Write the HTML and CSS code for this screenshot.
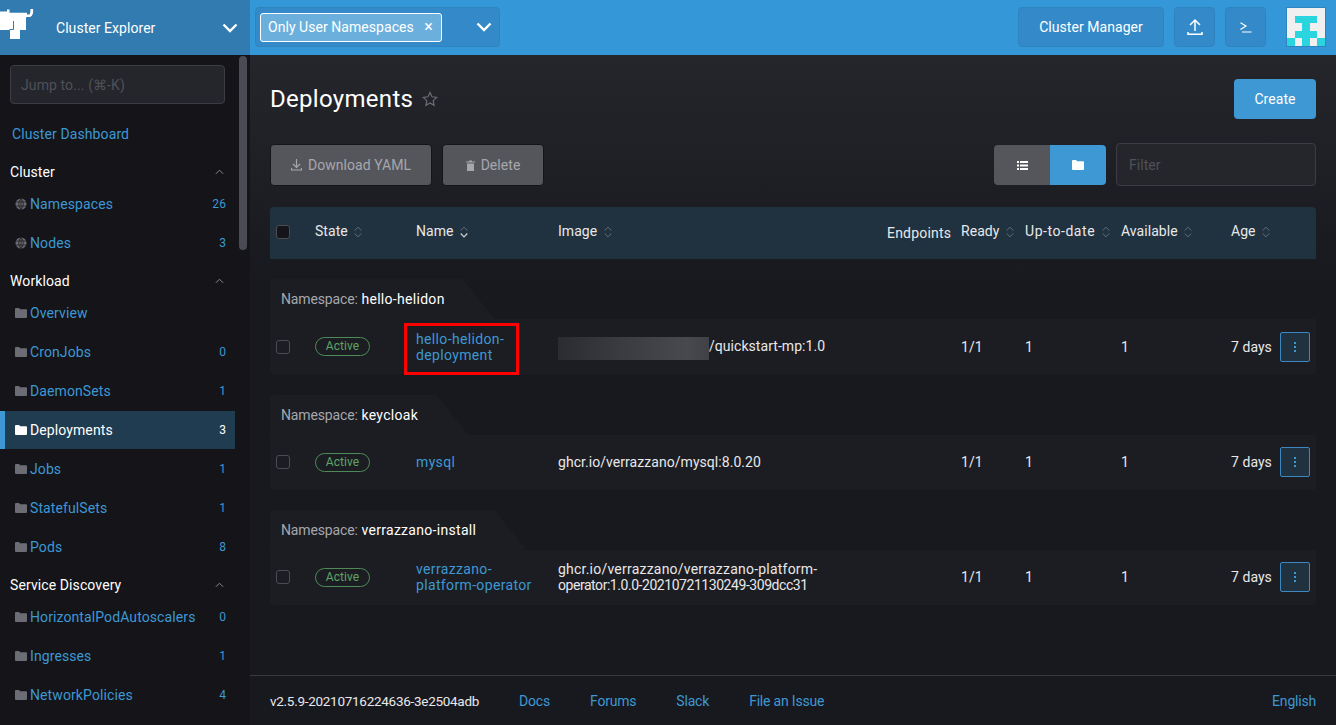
FILE: index.html

```html
<!DOCTYPE html>
<html lang="en">
<head>
  <meta charset="UTF-8" />
  <title>Deployments</title>
  <link rel="stylesheet" href="styles.css">
</head>
<body>
  <svg class="icon-defs" width="0" height="0">
    <symbol id="folder" viewBox="0 0 12 10"><path d="M0 1a1 1 0 0 1 1-1h3l1.200 1.200H11a1 1 0 0 1 1 1V9a1 1 0 0 1-1 1H1a1 1 0 0 1-1-1z"/></symbol>
    <symbol id="globe" viewBox="0 0 12 12"><circle cx="6" cy="6" r="5.500"/><path fill="none" stroke="#141419" stroke-width=".7" d="M.5 4h11M.5 8h11M6 .5v11M6 .5c-3 3-3 8 0 11M6 .5c3 3 3 8 0 11"/></symbol>
    <symbol id="sort" viewBox="0 0 8 12"><path fill="none" stroke="currentColor" stroke-width="1" d="M.7 4.500L4 1.200l3.300 3.300M.7 7.500L4 10.800l3.300-3.300"/></symbol>
    <symbol id="sort-down" viewBox="0 0 8 12"><path fill="none" stroke="#6c6d74" stroke-width="1" d="M.7 4.500L4 1.200l3.300 3.300"/><path fill="none" stroke="#d0d1d5" stroke-width="1.200" d="M.7 7.500L4 10.800l3.300-3.300"/></symbol>
    <symbol id="chev" viewBox="0 0 16 10"><path fill="none" stroke="currentColor" stroke-width="2.400" d="M1.500 1.500L8 8l6.500-6.500"/></symbol>
    <symbol id="up" viewBox="0 0 10 6"><path fill="none" stroke="currentColor" stroke-width="1.100" d="M1 5l4-4 4 4"/></symbol>
  </svg>

  <div class="app">
    <div class="brand">
      <svg class="logo" viewBox="0 0 34 40" width="34" height="40">
        <path fill="#fff" d="M0 11.500h7V9.500h2.500v3.300H27v4.500h-1V30h-6v9h-10V30H0z"/>
        <path fill="#fff" d="M30.500 9c1.500 0 2 0 2.500 0 .5 3 0 7-3 8h-3v-2.500h2c1 0 1.500-2 1.500-5.500z"/>
        <path fill="none" stroke="#317bb0" stroke-width="1" d="M13.500 21v8.500H9.500"/>
      </svg>
      <span class="brand-name">Cluster Explorer</span>
      <svg class="chev"><use href="#chev"/></svg>
    </div>

    <header class="topbar">
      <div class="ns-select">
        <span class="ns-tag">Only User Namespaces <i>×</i></span>
        <svg class="chev"><use href="#chev"/></svg>
      </div>
      <div class="top-actions">
        <button class="top-btn manager">Cluster Manager</button>
        <button class="top-btn square">
          <svg width="16" height="18" viewBox="0 0 16 18"><path fill="none" stroke="#fff" stroke-width="1.500" d="M8 13V2M3 7l5-5 5 5M1 14v2.200h14V14"/></svg>
        </button>
        <button class="top-btn square">
          <svg width="12" height="11" viewBox="0 0 12 11"><path fill="none" stroke="#fff" stroke-width="1.200" d="M.5.700l5.500 3.400L.5 7.500M2 10h9.500"/></svg>
        </button>
        <svg class="avatar" viewBox="0 0 5 5" width="38" height="38" shape-rendering="crispEdges">
          <rect width="5" height="5" fill="#f0f0f0"/>
          <path fill="#2bd5e0" d="M1 1h3v1H3v1h1v1h1v1H4V4H3v1H2V4H1v1H0V4h1V3h1V2H1z"/>
        </svg>
      </div>
    </header>

    <nav class="sidebar">
      <div class="scrollthumb"></div>
      <input class="jump" placeholder="Jump to... (⌘-K)">
      <a class="dash" href="#">Cluster Dashboard</a>

      <div class="group-title">Cluster <svg class="caret"><use href="#up"/></svg></div>
      <a class="nav-item" href="#"><svg class="ico"><use href="#globe"/></svg>Namespaces<b>26</b></a>
      <a class="nav-item" href="#"><svg class="ico"><use href="#globe"/></svg>Nodes<b>3</b></a>

      <div class="group-title">Workload <svg class="caret"><use href="#up"/></svg></div>
      <a class="nav-item" href="#"><svg class="ico"><use href="#folder"/></svg>Overview</a>
      <a class="nav-item" href="#"><svg class="ico"><use href="#folder"/></svg>CronJobs<b>0</b></a>
      <a class="nav-item" href="#"><svg class="ico"><use href="#folder"/></svg>DaemonSets<b>1</b></a>
      <a class="nav-item active" href="#"><svg class="ico"><use href="#folder"/></svg>Deployments<b>3</b></a>
      <a class="nav-item" href="#"><svg class="ico"><use href="#folder"/></svg>Jobs<b>1</b></a>
      <a class="nav-item" href="#"><svg class="ico"><use href="#folder"/></svg>StatefulSets<b>1</b></a>
      <a class="nav-item" href="#"><svg class="ico"><use href="#folder"/></svg>Pods<b>8</b></a>

      <div class="group-title">Service Discovery <svg class="caret"><use href="#up"/></svg></div>
      <a class="nav-item" href="#"><svg class="ico"><use href="#folder"/></svg>HorizontalPodAutoscalers<b>0</b></a>
      <a class="nav-item" href="#"><svg class="ico"><use href="#folder"/></svg>Ingresses<b>1</b></a>
      <a class="nav-item" href="#"><svg class="ico"><use href="#folder"/></svg>NetworkPolicies<b>4</b></a>
    </nav>

    <main class="main">
      <div class="content">
        <div class="title-row">
          <h1>Deployments</h1>
          <svg class="star" width="16" height="16" viewBox="0 0 16 16"><path fill="none" stroke="currentColor" stroke-width="1.200" d="M8 1.500l2 4.300 4.700.6-3.500 3.200.9 4.700L8 12l-4.100 2.300.9-4.700L1.300 6.400 6 5.800z"/></svg>
          <button class="create">Create</button>
        </div>

        <div class="tools">
          <button class="bulk dl">
            <svg width="11" height="12" viewBox="0 0 11 12"><path fill="none" stroke="currentColor" stroke-width="1.200" d="M5.500 0v8M2 5l3.500 3.500L9 5M.5 9v2h10V9"/></svg>
            Download YAML
          </button>
          <button class="bulk del">
            <svg width="9" height="11" viewBox="0 0 9 11"><path fill="currentColor" d="M0 1.500h3V.5h3v1h3v1H0zM1 3.500h7V11H1z"/></svg>
            Delete
          </button>
          <div class="toggle">
            <span class="tg">
              <svg width="11" height="9" viewBox="0 0 11 9"><path fill="#fff" d="M0 0h2v2H0zM3 0h8v2H3zM0 3.500h2v2H0zM3 3.500h8v2H3zM0 7h2v2H0zM3 7h8v2H3z"/></svg>
            </span>
            <span class="tg on"><svg class="ico-sm"><use href="#folder"/></svg></span>
          </div>
          <input class="filter" placeholder="Filter">
        </div>

        <div class="table">
          <div class="thead row">
            <span><i class="cb head"></i></span>
            <span>State <svg class="sort"><use href="#sort"/></svg></span>
            <span>Name <svg class="sort"><use href="#sort-down"/></svg></span>
            <span>Image <svg class="sort"><use href="#sort"/></svg></span>
            <span class="ep">Endpoints</span>
            <span>Ready <svg class="sort"><use href="#sort"/></svg></span>
            <span class="upd">Up-to-date <svg class="sort"><use href="#sort"/></svg></span>
            <span>Available <svg class="sort"><use href="#sort"/></svg></span>
            <span>Age <svg class="sort"><use href="#sort"/></svg></span>
            <span></span>
          </div>

          <div class="ns-group first">
            <div class="ns-tab"><em>Namespace:</em> hello-helidon</div>
            <div class="row item">
              <span><i class="cb"></i></span>
              <span><span class="badge">Active</span></span>
              <span class="name marked"><a href="#">hello-helidon-<br>deployment</a></span>
              <span class="img"><span class="blur"></span>/quickstart-mp:1.0</span>
              <span></span>
              <span>1/1</span>
              <span>1</span>
              <span>1</span>
              <span>7 days</span>
              <span><button class="more"><svg width="2" height="10" viewBox="0 0 2 10"><path fill="#3d98d3" d="M0 0h2v2H0zM0 4h2v2H0zM0 8h2v2H0z"/></svg></button></span>
            </div>
          </div>

          <div class="ns-group">
            <div class="ns-tab"><em>Namespace:</em> keycloak</div>
            <div class="row item">
              <span><i class="cb"></i></span>
              <span><span class="badge">Active</span></span>
              <span class="name"><a href="#">mysql</a></span>
              <span class="img">ghcr.io/verrazzano/mysql:8.0.20</span>
              <span></span>
              <span>1/1</span>
              <span>1</span>
              <span>1</span>
              <span>7 days</span>
              <span><button class="more"><svg width="2" height="10" viewBox="0 0 2 10"><path fill="#3d98d3" d="M0 0h2v2H0zM0 4h2v2H0zM0 8h2v2H0z"/></svg></button></span>
            </div>
          </div>

          <div class="ns-group last">
            <div class="ns-tab"><em>Namespace:</em> verrazzano-install</div>
            <div class="row item">
              <span><i class="cb"></i></span>
              <span><span class="badge">Active</span></span>
              <span class="name"><a href="#">verrazzano-<br>platform-operator</a></span>
              <span class="img"><span class="loose">ghcr.io/verrazzano/verrazzano-platform-</span><br><span class="tight">operator:1.0.0-20210721130249-309dcc31</span></span>
              <span></span>
              <span>1/1</span>
              <span>1</span>
              <span>1</span>
              <span>7 days</span>
              <span><button class="more"><svg width="2" height="10" viewBox="0 0 2 10"><path fill="#3d98d3" d="M0 0h2v2H0zM0 4h2v2H0zM0 8h2v2H0z"/></svg></button></span>
            </div>
          </div>
        </div>
      </div>

      <footer class="foot">
        <span class="ver">v2.5.9-20210716224636-3e2504adb</span>
        <a href="#">Docs</a>
        <a href="#">Forums</a>
        <a href="#">Slack</a>
        <a href="#">File an Issue</a>
        <a class="lang" href="#">English</a>
      </footer>
    </main>
  </div>
</body>
</html>
```

FILE: styles.css

```css
* {
  box-sizing: border-box;
}
html, body {
  margin: 0;
  height: 100%;
  overflow: hidden;
}
body {
  font-family: Roboto, "Noto Sans", sans-serif;
  font-size: 14px;
  letter-spacing: 0.05px;
  color: #e8e8ea;
  background: #18191e;
}
a {
  color: #3d98d3;
  text-decoration: none;
}
button, input {
  font-family: inherit;
  letter-spacing: inherit;
}
.icon-defs {
  position: absolute;
}
.app {
  display: grid;
  grid-template-columns: 250px 1fr;
  grid-template-rows: 55px 670px;
  height: 725px;
}

/* header */
.brand {
  background: #317bb0;
  display: flex;
  align-items: center;
  color: #fff;
  overflow: hidden;
}
.logo {
  flex: none;
  align-self: flex-start;
}
.brand-name {
  margin-left: 22px;
  flex: 1;
}
.chev {
  width: 16px;
  height: 10px;
  color: #fff;
}
.brand .chev {
  margin-right: 12px;
}
.topbar {
  background: #3498d8;
  display: flex;
  align-items: center;
  justify-content: space-between;
  padding: 0 10px 0 5px;
}
.ns-select {
  width: 245px;
  height: 40px;
  margin-top: -1px;
  border: 1px solid #2f84bf;
  background: #348ac8;
  border-radius: 4px;
  display: flex;
  align-items: center;
  justify-content: space-between;
  padding: 0 6px 0 4px;
}
.ns-tag {
  height: 29px;
  width: 182px;
  line-height: 25px;
  padding-left: 7px;
  border: 1px solid #fff;
  border-radius: 3px;
  background: #6bb0dd;
  color: #fff;
  white-space: nowrap;
}
.ns-tag i {
  font-style: normal;
  font-size: 16px;
  margin-left: 7px;
}
.ns-select .chev {
  margin-right: 1px;
}
.top-actions {
  display: flex;
  align-items: center;
}
.top-btn {
  height: 40px;
  margin-top: -1px;
  background: #348ac8;
  border: 1px solid #2f84bf;
  border-radius: 4px;
  color: #fff;
  font-size: 14px;
  padding: 0;
  display: flex;
  align-items: center;
  justify-content: center;
}
.manager {
  width: 146px;
}
.square {
  width: 41px;
  margin-left: 10px;
}
.avatar {
  margin-left: 20px;
  margin-top: -1px;
  border: 1px solid #2f84bf;
  width: 40px;
  height: 40px;
}

/* sidebar */
.sidebar {
  position: relative;
  background: #141419;
  overflow: hidden;
  display: flex;
  flex-direction: column;
  padding-top: 10px;
  letter-spacing: 0.1px;
}
.scrollthumb {
  position: absolute;
  left: 239px;
  top: 1px;
  width: 8px;
  height: 194px;
  border-radius: 4px;
  background: #4b4c53;
}
.jump {
  width: 215px;
  height: 39px;
  margin-left: 10px;
  flex: none;
  background: #25262c;
  border: 1px solid #3c3d44;
  border-radius: 4px;
  padding: 0 10px;
  font-size: 14px;
}
.jump::placeholder {
  color: #4f5058;
}
.dash {
  margin: 22px 0 0 12px;
  line-height: 17px;
  flex: none;
}
.group-title {
  flex: none;
  width: 235px;
  height: 20px;
  line-height: 20px;
  padding: 0 10px;
  margin-top: 19px;
  color: #fff;
  display: flex;
  justify-content: space-between;
  align-items: center;
}
.group-title + .nav-item {
  margin-top: 2px;
}
.nav-item + .group-title {
  margin-top: 9px;
}
.caret {
  width: 9px;
  height: 6px;
  color: #8a8b92;
  margin-right: 1px;
}
.nav-item {
  flex: none;
  position: relative;
  width: 235px;
  height: 39px;
  padding: 0 9px 0 15px;
  display: flex;
  align-items: center;
}
.nav-item b {
  margin-left: auto;
  font-weight: 400;
  font-size: 12px;
}
.ico {
  width: 12px;
  height: 10px;
  margin-right: 3px;
  fill: #6c6d74;
  flex: none;
}
.nav-item .ico:has(use[href="#globe"]) {
  height: 12px;
}
.nav-item.active {
  background: #203c50;
  color: #fff;
  border-left: 5px solid #3d98d3;
  padding-left: 10px;
  height: 38px;
  margin: 1px 0 0;
}
.nav-item.active .ico {
  fill: #fff;
}

/* main */
.main {
  display: flex;
  flex-direction: column;
  background: linear-gradient(#25262c, #18191e 230px);
  min-width: 0;
}
.content {
  flex: 1;
  padding: 24px 20px 0;
}
.title-row {
  display: flex;
  align-items: center;
  height: 40px;
}
h1 {
  margin: 0;
  font-size: 24px;
  font-weight: 400;
  color: #fff;
  letter-spacing: 0.3px;
}
.star {
  margin-left: 9px;
  color: #6c6d74;
}
.create {
  margin-left: auto;
  width: 82px;
  height: 40px;
  border: none;
  border-radius: 4px;
  background: #3d98d3;
  color: #fff;
  font-size: 14px;
}
.tools {
  display: flex;
  align-items: center;
  margin-top: 25px;
  height: 42px;
}
.bulk {
  height: 42px;
  border: 1px solid #141419;
  border-radius: 4px;
  background: #55565c;
  color: #a6a7ad;
  font-size: 14px;
  display: flex;
  align-items: center;
  justify-content: center;
  gap: 6px;
}
.dl {
  width: 162px;
}
.del {
  width: 102px;
  margin-left: 10px;
}
.toggle {
  margin-left: auto;
  display: flex;
  height: 40px;
  border-radius: 4px;
  overflow: hidden;
}
.tg {
  width: 56px;
  background: #55565c;
  display: flex;
  align-items: center;
  justify-content: center;
}
.tg.on {
  background: #3d98d3;
}
.ico-sm {
  width: 12px;
  height: 10px;
  fill: #fff;
}
.filter {
  width: 200px;
  height: 43px;
  align-self: flex-start;
  margin: -1px 0 0 10px;
  background: #25262c;
  border: 1px solid #3c3d44;
  border-radius: 4px;
  padding: 0 12px;
  font-size: 14px;
}
.filter::placeholder {
  color: #4f5058;
}

/* table */
.table {
  margin-top: 21px;
}
.row {
  display: grid;
  grid-template-columns: 35px 101px 142px 329px 74px 64px 96px 110px 59px 36px;
  align-items: center;
}
.row > span {
  padding-left: 10px;
  white-space: nowrap;
}
.row > span:first-child {
  padding-left: 6px;
}
.row > span:last-child {
  padding-left: 0;
}
.thead {
  height: 52px;
  background: #20313f;
  border-radius: 4px 4px 0 0;
  color: #e8e8ea;
}
.thead > span {
  position: relative;
  top: -2px;
}
.thead > .ep {
  top: 0;
  letter-spacing: 0.2px;
}
.thead > .upd {
  letter-spacing: 0.55px;
}
.thead > span:first-child {
  top: -1px;
}
.sort {
  width: 8px;
  height: 12px;
  margin-left: 3px;
  vertical-align: -2px;
  color: #6c6d74;
}
.cb {
  display: block;
  width: 14px;
  height: 14px;
  border: 1px solid #4b4c53;
  border-radius: 3px;
}
.cb.head {
  background: #141419;
}
.ns-group {
  margin-top: 20.5px;
}
.ns-group.first {
  margin-top: 20px;
}
.ns-group.last {
  margin-top: 20px;
}
.ns-tab {
  height: 40px;
  width: max-content;
  padding: 0 50px 0 11px;
  line-height: 40px;
  background: #1c1d22;
  color: #fff;
  letter-spacing: 0.3px;
  clip-path: polygon(0 0, calc(100% - 32px) 0, 100% 100%, 0 100%);
  border-radius: 4px 0 0 0;
}
.ns-tab em {
  font-style: normal;
  color: #a6a7ad;
  letter-spacing: -0.15px;
}
.item {
  height: 55px;
  background: #1c1d22;
  line-height: 16px;
  border-radius: 0 0 4px 4px;
}
.name {
  position: relative;
  letter-spacing: 0.35px;
}
.marked::after {
  content: "";
  box-sizing: border-box;
  position: absolute;
  left: -2px;
  top: -8px;
  width: 115px;
  height: 52px;
  border: 3px solid #f00;
}
.badge {
  display: inline-block;
  width: 55px;
  height: 19px;
  line-height: 17px;
  font-size: 12px;
  text-align: center;
  border: 1px solid #4d8a55;
  border-radius: 10px;
  color: #5da566;
}
.img .tight {
  letter-spacing: -0.45px;
}
.img .loose {
  letter-spacing: 0.22px;
}
.blur {
  display: inline-block;
  width: 151px;
  height: 23px;
  margin: -3px 0 -5px;
  vertical-align: middle;
  background: linear-gradient(90deg, #2b2c31, #3a3b40 40%, #48494e 85%, #404146);
}
.more {
  width: 30px;
  height: 30px;
  padding: 0;
  border: 1px solid #3d88c0;
  border-radius: 2px;
  background: #20313f;
  display: flex;
  align-items: center;
  justify-content: center;
}

/* footer */
.foot {
  height: 50px;
  flex: none;
  border-top: 1px solid #3a3b41;
  padding: 0 20px;
  display: flex;
  align-items: center;
  gap: 40px;
  letter-spacing: -0.2px;
}
.lang {
  margin-left: auto;
}
.ver {
  color: #e8e8ea;
  font-size: 13.5px;
  letter-spacing: -0.28px;
}
```
